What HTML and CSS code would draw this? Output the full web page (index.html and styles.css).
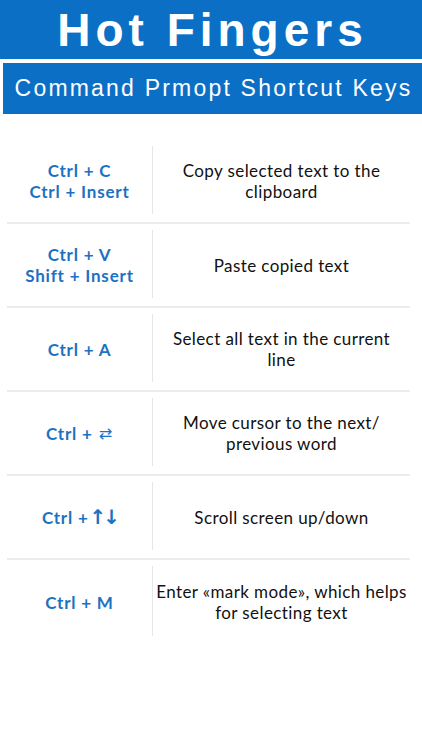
FILE: index.html
```html
<!DOCTYPE html>
<html>
<head>
<meta charset="utf-8">
<link rel="stylesheet" href="styles.css">
</head>
<body>
<header class="header">
  <div class="title-band"><h1 class="title">Hot Fingers</h1></div>
  <div class="sub-band"><h2 class="subtitle">Command Prmopt Shortcut Keys</h2></div>
</header>
<main class="table">
  <div class="row">
    <div class="keys">Ctrl + C<br>Ctrl + Insert</div>
    <div class="divider"></div>
    <div class="desc">Copy selected text to the<br>clipboard</div>
  </div>
  <div class="row">
    <div class="keys">Ctrl + V<br>Shift + Insert</div>
    <div class="divider"></div>
    <div class="desc">Paste copied text</div>
  </div>
  <div class="row">
    <div class="keys">Ctrl + A</div>
    <div class="divider"></div>
    <div class="desc">Select all text in the current<br>line</div>
  </div>
  <div class="row">
    <div class="keys">Ctrl +<span class="arrows-lr">⇄</span></div>
    <div class="divider"></div>
    <div class="desc">Move cursor to the next/<br>previous word</div>
  </div>
  <div class="row">
    <div class="keys">Ctrl +<span class="arrows-ud">↑↓</span></div>
    <div class="divider"></div>
    <div class="desc">Scroll screen up/down</div>
  </div>
  <div class="row last">
    <div class="keys">Ctrl + M</div>
    <div class="divider"></div>
    <div class="desc">Enter «mark mode», which helps<br>for selecting text</div>
  </div>
</main>
</body>
</html>
```

FILE: styles.css
```css
* { box-sizing: border-box; }
html, body { margin: 0; padding: 0; background: #ffffff; }
body { width: 422px; height: 750px; overflow: hidden; }

.header { display: flex; flex-direction: column; gap: 4px; }
.title-band {
  background: #0b6fc6;
  height: 59px;
  display: flex;
  align-items: center;
  justify-content: center;
}
.title {
  margin: 0 0 0 3px;
  color: #ffffff;
  font-family: "Liberation Sans", Arial, sans-serif;
  font-weight: bold;
  font-size: 46px;
  letter-spacing: 5px;
  line-height: 1;
}
.sub-band {
  background: #0b6fc6;
  height: 51px;
  margin-left: 3px;
  display: flex;
  align-items: center;
  justify-content: center;
}
.subtitle {
  margin: 0 0 0 2px;
  color: #ffffff;
  font-family: "Liberation Sans", Arial, sans-serif;
  font-weight: normal;
  font-size: 23px;
  letter-spacing: 2.2px;
  line-height: 1;
}

.table {
  margin: 26px 12px 0 7px;
  display: flex;
  flex-direction: column;
}
.row {
  display: flex;
  align-items: stretch;
  height: 84px;
  border-bottom: 2px solid #ececec;
}
.row.last { border-bottom: none; }
.keys {
  width: 145px;
  display: flex;
  align-items: center;
  justify-content: center;
  text-align: center;
  color: #1b72c2;
  font-family: Lato, sans-serif;
  font-weight: bold;
  font-size: 17px;
  letter-spacing: 0.8px;
  line-height: 21px;
  white-space: pre;
}
.divider {
  width: 1px;
  background: #e6e6e6;
  margin: 6px 0 8px;
}
.desc {
  flex: 1;
  display: flex;
  align-items: center;
  justify-content: center;
  text-align: center;
  color: #111111;
  font-family: Lato, sans-serif;
  font-size: 17px;
  letter-spacing: 0.4px;
  line-height: 21px;
  white-space: nowrap;
}
.arrows-lr {
  font-family: "DejaVu Sans", sans-serif;
  font-size: 16px;
  font-weight: normal;
  margin-left: 6px;
}
.arrows-ud {
  font-family: "DejaVu Sans", sans-serif;
  font-size: 20px;
  font-weight: bold;
  letter-spacing: -3px;
  margin-left: 1px;
}
```
